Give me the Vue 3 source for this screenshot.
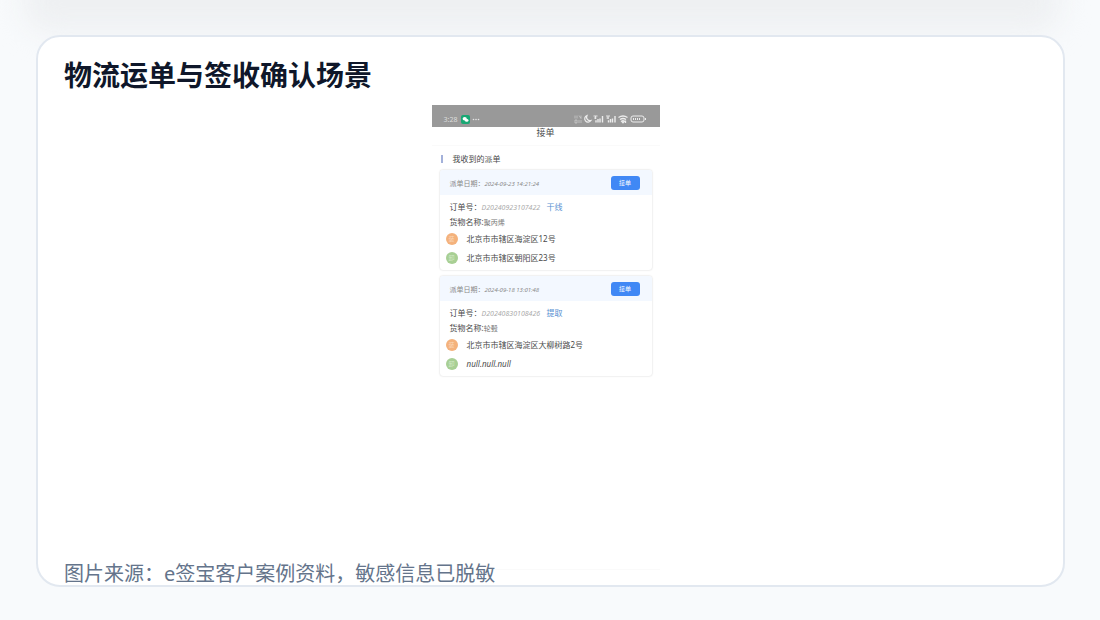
<script setup>
const orders = [
  {
    date: '2024-09-23 14:21:24', no: 'D20240923107422', type: '干线', goods: '聚丙烯',
    from: '北京市市辖区海淀区12号', to: '北京市市辖区朝阳区23号'
  },
  {
    date: '2024-09-18 13:01:48', no: 'D20240830108426', type: '提取', goods: '轮毂',
    from: '北京市市辖区海淀区大柳树路2号', to: 'null.null.null'
  }
]
</script>

<template>
  <main class="page">
    <figure class="panel">
      <h1>物流运单与签收确认场景</h1>
      <div class="phone">
        <div class="status">
          <span class="time">3:28</span>
          <svg class="chat" width="9" height="9" viewBox="0 0 9 9">
            <rect width="9" height="9" rx="2" fill="#19a874" />
            <ellipse cx="3.7" cy="3.8" rx="2.1" ry="1.7" fill="#fff" />
            <ellipse cx="5.7" cy="5.4" rx="1.8" ry="1.4" fill="#fff" />
          </svg>
          <svg width="8" height="9" viewBox="0 0 8 9" fill="#e5e5e5">
            <circle cx="1.5" cy="4.5" r=".8" /><circle cx="4" cy="4.5" r=".8" /><circle cx="6.5" cy="4.5" r=".8" />
          </svg>
          <svg class="signals" width="74" height="10" viewBox="0 0 74 10" fill="none" stroke="#ededed">
            <path d="M1 1.500v3M3 1.500v3M5 1.500l2 3M7 1.500v3M1 6h2v3H1zM5 6v3M7 6v3" stroke-width=".7" opacity=".65" />
            <path d="M13 1.500a3.400 3.400 0 1 0 4 5a3.500 3.500 0 0 1-4-5z" stroke-width="1.200" />
            <path d="M19.500 2h4M21.500 2v3M20 4h2.500" stroke-width=".9" />
            <path d="M22 8.500V6.200M24 8.500V5M26 8.500v-4M28.500 8.500V2" stroke-width="1.400" />
            <path d="M32 2h4M34 2v3M32.500 4H35" stroke-width=".9" />
            <path d="M34.500 8.500V6.200M36.500 8.500V5M38.500 8.500v-4M41 8.500V2" stroke-width="1.400" />
            <path d="M44.500 3.500q4.500-3 9 0M46 5.500q3-2 6 0M47.500 7.200q1.500-1 3 0l-1.500 1.600zM51.500 6.500v2.500" stroke-width="1.300" />
            <rect x="57" y="2" width="13" height="6" rx="2" />
            <path d="M59.500 4v2M61.500 4v2M63.500 4v2M65.500 4v2M71.500 4v2" />
          </svg>
        </div>
        <div class="nav">接单</div>
        <h2>我收到的派单</h2>
        <article v-for="o in orders" :key="o.no" class="order">
          <header>
            <span>派单日期：<time>{{ o.date }}</time></span>
            <button type="button">接单</button>
          </header>
          <div class="body">
            <p>订单号：<span class="no">{{ o.no }}</span><a href="#">{{ o.type }}</a></p>
            <p>货物名称:<small>{{ o.goods }}</small></p>
            <p class="stop"><i class="load">装</i>{{ o.from }}</p>
            <p class="stop"><i class="unload">卸</i><span :class="{ empty: o.to.startsWith('null') }">{{ o.to }}</span></p>
          </div>
        </article>
        <div class="home"></div>
      </div>
      <figcaption>图片来源：e签宝客户案例资料，敏感信息已脱敏</figcaption>
    </figure>
  </main>
</template>

<style>
body { margin: 0; background: #f8fafc; }
</style>
<style scoped>
* { box-sizing: border-box; }
.page {
  position: relative;
  min-height: 100vh;
  padding: 35px 35px 33px 36px;
  display: flex;
  overflow: hidden;
  background: #f8fafc;
  font-family: "Noto Sans", "Noto Sans CJK SC", sans-serif;
}
.page::before {
  content: "";
  position: absolute;
  top: -60px;
  left: 24px;
  right: 40px;
  height: 92px;
  border-radius: 24px;
  background: #eef0f2;
  filter: blur(14px);
}
.panel {
  position: relative;
  flex: 1;
  margin: 0;
  padding: 18px 26px 0;
  display: flex;
  flex-direction: column;
  background: #fff;
  border: 2px solid #e2e8f0;
  border-radius: 24px;
}
h1 { margin: 0; font-size: 28px; line-height: 40px; font-weight: 700; color: #0f172a; }
.phone {
  flex: 1;
  width: 228px;
  margin: 10px 10px 0 0;
  align-self: center;
  display: flex;
  flex-direction: column;
  color: #4a4a4a;
}
.status {
  height: 22px;
  padding: 6px 12px 0;
  display: flex;
  align-items: center;
  background: #999;
  color: #ddd;
}
.time { width: 17px; font-size: 7px; }
.chat { margin-right: 2px; }
.signals { margin-left: auto; }
.nav { height: 19px; text-align: center; font-size: 9px; line-height: 11px; border-bottom: 1px solid #fafafa; }
h2 {
  margin: 9px 9px 7px;
  padding-left: 10px;
  border-left: 2px solid #a3b1da;
  font-size: 8px;
  line-height: 8px;
  font-weight: 400;
}
.order {
  margin: 0 8px 6px;
  border-radius: 3px;
  box-shadow: 0 0 2px #ccc;
}
.order header {
  height: 25px;
  padding: 0 12px 0 10px;
  display: flex;
  align-items: center;
  justify-content: space-between;
  background: #f3f8ff;
  border-radius: 3px 3px 0 0;
  font-size: 7px;
  color: #8a8a8a;
}
time { font-size: 6px; font-style: italic; }
button {
  width: 29px;
  height: 14px;
  padding: 0;
  border: 0;
  border-radius: 3px;
  background: #4088f5;
  color: #fff;
  font: 6px/14px "Noto Sans CJK SC", sans-serif;
}
.body { padding: 4px 10px 3px; }
.body p { margin: 0; font-size: 8px; line-height: 15px; height: 15px; }
.no { display: inline-block; width: 65px; font-size: 7px; font-style: italic; color: #aaa; }
a { color: #5a91d2; text-decoration: none; }
small { font-size: 7px; color: #777; }
.body .stop { height: 19px; line-height: 19px; display: flex; align-items: center; margin-left: -4px; }
.empty { font-style: italic; }
i {
  width: 12px;
  height: 12px;
  margin-right: 9px;
  border-radius: 50%;
  font-size: 6px;
  line-height: 12px;
  font-style: normal;
  text-align: center;
}
.load { background: #f4b27c; color: #fbd9bd; }
.unload { background: #a8cf94; color: #d5ebc9; }
.home { margin-top: auto; margin-bottom: 17px; height: 1px; background: #fafafa; }
figcaption { position: relative; margin: -27px 0 -2px; font-size: 20px; line-height: 27px; color: #64748b; }
</style>
